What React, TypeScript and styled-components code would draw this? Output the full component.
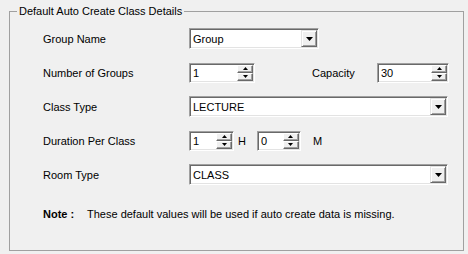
import styled, { createGlobalStyle } from "styled-components";

const GlobalStyle = createGlobalStyle`
  html, body {
    margin: 0;
    padding: 0;
    background: #f0f0f0;
  }
  body {
    font-family: "Liberation Sans", Arial, sans-serif;
    font-size: 11px;
    color: #000;
  }
`;

const Page = styled.div`
  width: 468px;
  height: 254px;
  box-sizing: border-box;
  padding: 5px 0 0 9px;
  overflow: hidden;
`;

const GroupBox = styled.fieldset`
  margin: 0;
  padding: 0;
  width: 455px;
  height: 246px;
  box-sizing: border-box;
  border: 1px solid #a0a0a0;
  border-radius: 0;
  min-inline-size: 0;
`;

const Legend = styled.legend`
  margin-left: 7px;
  padding: 0 2px;
  line-height: 13px;
  font-size: 11px;
  color: #000;
`;

const Body = styled.div`
  display: flex;
  flex-direction: column;
  gap: 13px;
  padding: 10px 0 0 33px;
`;

const Row = styled.div`
  display: flex;
  align-items: center;
  height: 21px;
`;

const Label = styled.span<{ $width?: number }>`
  width: ${(p) => (p.$width ? `${p.$width}px` : "auto")};
  flex: none;
  white-space: nowrap;
`;

const Unit = styled.span<{ $left: number; $right: number }>`
  margin: 0 ${(p) => p.$right}px 0 ${(p) => p.$left}px;
`;

const Sunken = styled.div<{ $width: number; $height: number }>`
  width: ${(p) => p.$width}px;
  height: ${(p) => p.$height}px;
  box-sizing: border-box;
  flex: none;
  display: flex;
  align-items: center;
  background: #fff;
  border-top: 1px solid #a0a0a0;
  border-left: 1px solid #a0a0a0;
  border-right: 1px solid #fff;
  border-bottom: 1px solid #fff;
  box-shadow: inset 1px 1px 0 #696969, inset -1px -1px 0 #e3e3e3;
`;

const FieldText = styled.span`
  flex: 1;
  padding-left: 3px;
  white-space: nowrap;
  overflow: hidden;
`;

const DropButton = styled.div`
  width: 16px;
  height: 17px;
  margin-right: 1px;
  box-sizing: border-box;
  display: flex;
  align-items: center;
  justify-content: center;
  background: #f0f0f0;
  border-top: 1px solid #e3e3e3;
  border-left: 1px solid #e3e3e3;
  border-right: 1px solid #696969;
  border-bottom: 1px solid #696969;
  box-shadow: inset 1px 1px 0 #fff, inset -1px -1px 0 #a0a0a0;
`;

const SpinColumn = styled.div`
  display: flex;
  flex-direction: column;
  margin-right: 1px;
`;

const SpinButton = styled.div`
  width: 16px;
  height: 8px;
  box-sizing: border-box;
  display: flex;
  align-items: center;
  justify-content: center;
  background: #f0f0f0;
  border-top: 1px solid #fff;
  border-left: 1px solid #fff;
  border-right: 1px solid #696969;
  border-bottom: 1px solid #696969;
  box-shadow: inset -1px -1px 0 #a0a0a0;
`;

const Spacer = styled.div<{ $w: number }>`
  width: ${(p) => p.$w}px;
  flex: none;
`;

const Note = styled.div`
  display: flex;
  margin-top: 10px;
  line-height: 13px;
`;

const NoteLabel = styled.span`
  font-weight: bold;
  width: 44px;
  flex: none;
`;

function Arrow({ up, w = 7, h = 4 }: { up?: boolean; w?: number; h?: number }) {
  return (
    <svg width={w} height={h} viewBox={`0 0 ${w} ${h}`}>
      <polygon
        points={up ? `0,${h} ${w},${h} ${w / 2},0` : `0,0 ${w},0 ${w / 2},${h}`}
        fill="#000"
      />
    </svg>
  );
}

function Combo({ value, width }: { value: string; width: number }) {
  return (
    <Sunken $width={width} $height={21}>
      <FieldText>{value}</FieldText>
      <DropButton>
        <Arrow />
      </DropButton>
    </Sunken>
  );
}

function Spinner({ value, width }: { value: string; width: number }) {
  return (
    <Sunken $width={width} $height={20}>
      <FieldText>{value}</FieldText>
      <SpinColumn>
        <SpinButton>
          <Arrow up w={5} h={3} />
        </SpinButton>
        <SpinButton>
          <Arrow w={5} h={3} />
        </SpinButton>
      </SpinColumn>
    </Sunken>
  );
}

export default function App() {
  return (
    <Page>
      <GlobalStyle />
      <GroupBox>
        <Legend>Default Auto Create Class Details</Legend>
        <Body>
          <Row>
            <Label $width={146}>Group Name</Label>
            <Combo value="Group" width={130} />
          </Row>
          <Row>
            <Label $width={146}>Number of Groups</Label>
            <Spinner value="1" width={66} />
            <Spacer $w={57} />
            <Label $width={65}>Capacity</Label>
            <Spinner value="30" width={72} />
          </Row>
          <Row>
            <Label $width={146}>Class Type</Label>
            <Combo value="LECTURE" width={259} />
          </Row>
          <Row>
            <Label $width={146}>Duration Per Class</Label>
            <Spinner value="1" width={45} />
            <Unit $left={4} $right={11}>H</Unit>
            <Spinner value="0" width={44} />
            <Unit $left={12} $right={0}>M</Unit>
          </Row>
          <Row>
            <Label $width={146}>Room Type</Label>
            <Combo value="CLASS" width={259} />
          </Row>
          <Note>
            <NoteLabel>Note :</NoteLabel>
            <span>These default values will be used if auto create data is missing.</span>
          </Note>
        </Body>
      </GroupBox>
    </Page>
  );
}
